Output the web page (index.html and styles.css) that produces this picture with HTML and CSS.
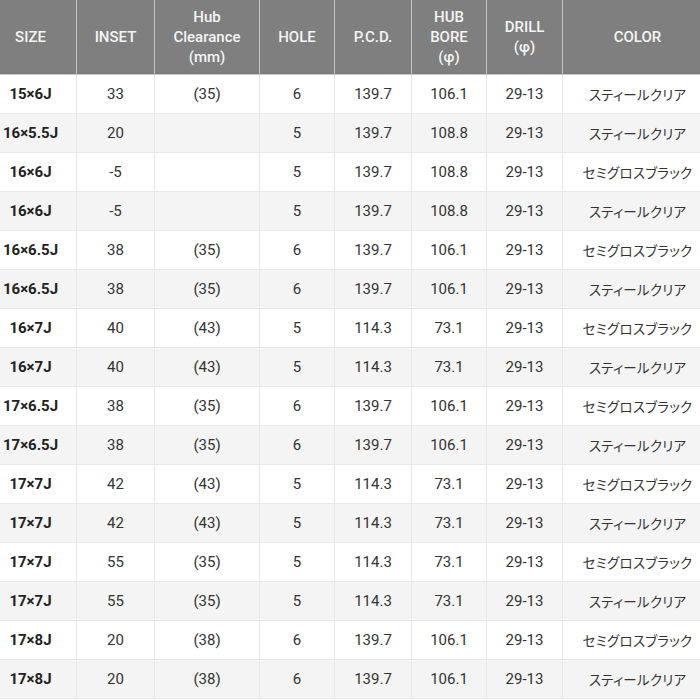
FILE: index.html
```html
<!DOCTYPE html>
<html lang="ja">
<head>
<meta charset="utf-8">
<link rel="stylesheet" href="styles.css">
</head>
<body>
<div class="wrap">
<table class="spec">
<colgroup>
<col class="c-size"><col class="c-inset"><col class="c-hub"><col class="c-hole"><col class="c-pcd"><col class="c-bore"><col class="c-drill"><col class="c-color">
</colgroup>
<thead>
<tr><th>SIZE</th><th>INSET</th><th>Hub<br>Clearance<br>(mm)</th><th>HOLE</th><th>P.C.D.</th><th>HUB<br>BORE<br>(φ)</th><th>DRILL<br>(φ)</th><th>COLOR</th></tr>
</thead>
<tbody>
<tr><td class="sz">15×6J</td><td>33</td><td>(35)</td><td>6</td><td>139.7</td><td>106.1</td><td>29-13</td><td class="jp">スティールクリア</td></tr>
<tr><td class="sz">16×5.5J</td><td>20</td><td></td><td>5</td><td>139.7</td><td>108.8</td><td>29-13</td><td class="jp">スティールクリア</td></tr>
<tr><td class="sz">16×6J</td><td>-5</td><td></td><td>5</td><td>139.7</td><td>108.8</td><td>29-13</td><td class="jp">セミグロスブラック</td></tr>
<tr><td class="sz">16×6J</td><td>-5</td><td></td><td>5</td><td>139.7</td><td>108.8</td><td>29-13</td><td class="jp">スティールクリア</td></tr>
<tr><td class="sz">16×6.5J</td><td>38</td><td>(35)</td><td>6</td><td>139.7</td><td>106.1</td><td>29-13</td><td class="jp">セミグロスブラック</td></tr>
<tr><td class="sz">16×6.5J</td><td>38</td><td>(35)</td><td>6</td><td>139.7</td><td>106.1</td><td>29-13</td><td class="jp">スティールクリア</td></tr>
<tr><td class="sz">16×7J</td><td>40</td><td>(43)</td><td>5</td><td>114.3</td><td>73.1</td><td>29-13</td><td class="jp">セミグロスブラック</td></tr>
<tr><td class="sz">16×7J</td><td>40</td><td>(43)</td><td>5</td><td>114.3</td><td>73.1</td><td>29-13</td><td class="jp">スティールクリア</td></tr>
<tr><td class="sz">17×6.5J</td><td>38</td><td>(35)</td><td>6</td><td>139.7</td><td>106.1</td><td>29-13</td><td class="jp">セミグロスブラック</td></tr>
<tr><td class="sz">17×6.5J</td><td>38</td><td>(35)</td><td>6</td><td>139.7</td><td>106.1</td><td>29-13</td><td class="jp">スティールクリア</td></tr>
<tr><td class="sz">17×7J</td><td>42</td><td>(43)</td><td>5</td><td>114.3</td><td>73.1</td><td>29-13</td><td class="jp">セミグロスブラック</td></tr>
<tr><td class="sz">17×7J</td><td>42</td><td>(43)</td><td>5</td><td>114.3</td><td>73.1</td><td>29-13</td><td class="jp">スティールクリア</td></tr>
<tr><td class="sz">17×7J</td><td>55</td><td>(35)</td><td>5</td><td>114.3</td><td>73.1</td><td>29-13</td><td class="jp">セミグロスブラック</td></tr>
<tr><td class="sz">17×7J</td><td>55</td><td>(35)</td><td>5</td><td>114.3</td><td>73.1</td><td>29-13</td><td class="jp">スティールクリア</td></tr>
<tr><td class="sz">17×8J</td><td>20</td><td>(38)</td><td>6</td><td>139.7</td><td>106.1</td><td>29-13</td><td class="jp">セミグロスブラック</td></tr>
<tr><td class="sz">17×8J</td><td>20</td><td>(38)</td><td>6</td><td>139.7</td><td>106.1</td><td>29-13</td><td class="jp">スティールクリア</td></tr>
</tbody>
</table>
</div>
</body>
</html>
```
FILE: styles.css
```css
html, body {
  margin: 0;
  padding: 0;
  background: #ffffff;
  overflow: hidden;
}
.wrap {
  width: 728px;
  margin-left: -16px;
}
.spec {
  width: 728px;
  table-layout: fixed;
  border-collapse: collapse;
  font-family: Roboto, "Noto Sans CJK JP", sans-serif;
  font-size: 15px;
  color: #333333;
}
.c-size { width: 92px; }
.c-inset { width: 78px; }
.c-hub { width: 105px; }
.c-hole { width: 75px; }
.c-pcd { width: 77px; }
.c-bore { width: 75px; }
.c-drill { width: 76px; }
.c-color { width: 150px; }
.spec th {
  background: #7f7f7f;
  color: #f4f4f4;
  font-weight: 500;
  line-height: 20px;
  height: 74px;
  padding: 0;
  border: 1px solid #c4c4c4;
  border-top: none;
  text-align: center;
  vertical-align: middle;
}
.spec td {
  height: 38px;
  padding: 0;
  text-align: center;
  vertical-align: middle;
  border: 1px solid #e8e8e8;
  white-space: nowrap;
}
.spec tbody tr:nth-child(even) td {
  background: #f4f4f4;
}
.spec td.sz {
  font-weight: 700;
  color: #222222;
}
.spec td.jp {
  font-family: "Noto Sans CJK JP", sans-serif;
  font-size: 13.5px;
  font-feature-settings: "palt";
  letter-spacing: 0.2px;
}
```
